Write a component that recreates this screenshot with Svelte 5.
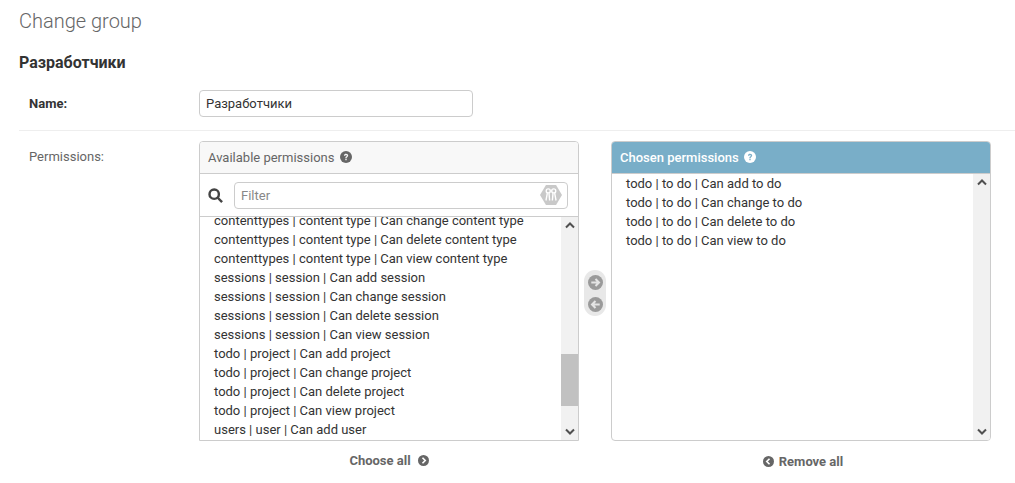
<script lang="ts">
  const available = [
    "contenttypes | content type | Can change content type",
    "contenttypes | content type | Can delete content type",
    "contenttypes | content type | Can view content type",
    "sessions | session | Can add session",
    "sessions | session | Can change session",
    "sessions | session | Can delete session",
    "sessions | session | Can view session",
    "todo | project | Can add project",
    "todo | project | Can change project",
    "todo | project | Can delete project",
    "todo | project | Can view project",
    "users | user | Can add user"
  ];
  const chosen = [
    "todo | to do | Can add to do",
    "todo | to do | Can change to do",
    "todo | to do | Can delete to do",
    "todo | to do | Can view to do"
  ];
</script>

{#snippet help()}
  <svg class="help" viewBox="0 0 16 16" width="12" height="12">
    <circle cx="8" cy="8" r="8" fill="currentColor" />
    <path d="M5.2 6.2C5.4 4.6 6.6 3.7 8.1 3.7c1.6 0 2.8 1 2.8 2.400 0 1.200-.7 1.700-1.400 2.200-.5.4-.7.6-.7 1.200H7.100c0-1.100.3-1.600 1-2.100.6-.4.9-.7.9-1.200 0-.5-.4-.8-.9-.8-.6 0-1 .4-1.100 1z" fill="var(--help-bg)" />
    <rect x="7.100" y="10.400" width="1.800" height="1.900" fill="var(--help-bg)" />
  </svg>
{/snippet}

{#snippet scrollbar(before: number, thumb: number, after: number)}
  <div class="scrollbar">
    <svg class="arrow" viewBox="0 0 10 7" width="10" height="7"><path d="M1 5.5 5 1.5l4 4" /></svg>
    <div class="track">
      <div style="height: {before}px"></div>
      <div class="thumb" style="height: {thumb}px"></div>
      <div style="height: {after}px"></div>
    </div>
    <svg class="arrow" viewBox="0 0 10 7" width="10" height="7"><path d="M1 1.5 5 5.5l4-4" /></svg>
  </div>
{/snippet}

<main>
  <h1>Change group</h1>
  <h2>Разработчики</h2>

  <div class="row name-row">
    <label class="required" for="name">Name:</label>
    <input id="name" class="name-input" value="Разработчики" />
  </div>

  <div class="row perms-row">
    <span class="perm-label">Permissions:</span>
    <div class="selector">
      <div class="column">
        <div class="box">
          <div class="box-title">Available permissions {@render help()}</div>
          <div class="filter">
            <svg class="search" viewBox="0 0 16 16">
              <circle cx="6.600" cy="6.600" r="5" />
              <path d="M10.400 10.400 15 15" />
            </svg>
            <div class="filter-input">
              <span>Filter</span>
              <svg class="keys" viewBox="0 0 24 24" width="22" height="22">
                <path d="M6.500 1h11L24 12l-6.500 11h-11L0 12z" fill="#c9c9c9" />
                <g fill="none" stroke="#fff" stroke-width="1.500">
                  <circle cx="9" cy="7.500" r="2.200" />
                  <circle cx="15" cy="7.500" r="2.200" />
                  <path d="M8 10 6.500 18M9.800 10 10.500 18M14.200 10 13.500 18M16 10 17.500 18" />
                </g>
              </svg>
            </div>
          </div>
          <div class="list-wrap">
            <ul class="list shifted">
              {#each available as item}
                <li>{item}</li>
              {/each}
            </ul>
            {@render scrollbar(120, 52, 20)}
          </div>
        </div>
        <div class="all-link choose">
          Choose all
          <svg viewBox="0 0 16 16" width="11" height="11">
            <circle cx="8" cy="8" r="8" fill="#666" />
            <path d="M6.500 4 10.500 8l-4 4" fill="none" stroke="#fff" stroke-width="2.400" />
          </svg>
        </div>
      </div>

      <div class="mover">
        <div class="mover-pill">
          <svg viewBox="0 0 16 16" width="15" height="15">
            <circle cx="8" cy="8" r="8" fill="#9a9a9a" />
            <path d="M3.500 8h8M8 4.300 11.700 8 8 11.700" fill="none" stroke="#e4e4e4" stroke-width="2.200" />
          </svg>
          <svg viewBox="0 0 16 16" width="15" height="15">
            <circle cx="8" cy="8" r="8" fill="#9a9a9a" />
            <path d="M12.500 8h-8M8 4.300 4.300 8 8 11.700" fill="none" stroke="#e4e4e4" stroke-width="2.200" />
          </svg>
        </div>
      </div>

      <div class="column">
        <div class="box chosen-box">
          <div class="box-title chosen-title">Chosen permissions {@render help()}</div>
          <div class="list-wrap">
            <ul class="list">
              {#each chosen as item}
                <li>{item}</li>
              {/each}
            </ul>
            {@render scrollbar(0, 0, 0)}
          </div>
        </div>
        <div class="all-link remove">
          <svg viewBox="0 0 16 16" width="11" height="11">
            <circle cx="8" cy="8" r="8" fill="#666" />
            <path d="M9.500 4 5.500 8l4 4" fill="none" stroke="#fff" stroke-width="2.400" />
          </svg>
          Remove all
        </div>
      </div>
    </div>
  </div>
</main>

<style>
  :global(body) {
    margin: 0;
    background: #fff;
  }

  main {
    padding: 0 0 0 19px;
    font-family: Roboto, "Liberation Sans", sans-serif;
    font-size: 13px;
    color: #333;
  }

  h1 {
    margin: 0;
    padding-top: 9px;
    font-size: 20px;
    line-height: 24px;
    font-weight: 300;
    color: #666;
  }

  h2 {
    margin: 21px 0 0;
    font-size: 16px;
    line-height: 18px;
    font-weight: 700;
    color: #333;
  }

  .row {
    display: flex;
    padding-left: 10px;
  }

  .name-row {
    padding-top: 18px;
    padding-bottom: 13px;
    border-bottom: 1px solid #eee;
    align-items: center;
  }

  label,
  .perm-label {
    width: 170px;
    flex: none;
    font-size: 13px;
    color: #666;
  }

  .required {
    font-weight: 700;
    color: #333;
  }

  .name-input {
    box-sizing: border-box;
    width: 274px;
    height: 27px;
    padding: 0 6px;
    border: 1px solid #ccc;
    border-radius: 4px;
    font: 13px Roboto, "Liberation Sans", sans-serif;
    color: #333;
    outline: none;
  }

  .perms-row {
    padding-top: 10px;
  }

  .perm-label {
    padding-top: 8px;
    line-height: 15px;
  }

  .selector {
    display: flex;
    width: 792px;
  }

  .column {
    width: 380px;
    flex: none;
  }

  .box {
    box-sizing: border-box;
    height: 300px;
    display: flex;
    flex-direction: column;
    border: 1px solid #ccc;
    border-radius: 4px 4px 0 0;
    overflow: hidden;
  }

  .chosen-box {
    border-radius: 4px;
  }

  .box-title {
    --help-bg: #f8f8f8;
    box-sizing: border-box;
    height: 32px;
    flex: none;
    display: flex;
    align-items: center;
    gap: 6px;
    padding-left: 8px;
    padding-bottom: 1px;
    background: #f8f8f8;
    border-bottom: 1px solid #ccc;
    font-size: 13px;
    color: #666;
  }

  .chosen-title {
    --help-bg: #79aec8;
    background: #79aec8;
    border-bottom-color: #ccc;
    font-weight: 500;
    color: #fff;
    gap: 5px;
    padding-left: 8px;
  }

  .filter {
    box-sizing: border-box;
    height: 43px;
    flex: none;
    display: flex;
    align-items: center;
    padding: 0 10px 0 8px;
    border-bottom: 1px solid #ccc;
  }

  .search {
    width: 15px;
    height: 15px;
    margin-right: 11px;
    fill: none;
    stroke: #444;
    stroke-width: 2.600;
  }

  .filter-input {
    box-sizing: border-box;
    flex: 1;
    height: 27px;
    display: flex;
    align-items: center;
    justify-content: space-between;
    padding: 0 5px 0 6px;
    border: 1px solid #ccc;
    border-radius: 4px;
    color: #888;
  }

  .list-wrap {
    flex: 1;
    min-height: 0;
    display: flex;
  }

  .list {
    flex: 1;
    min-width: 0;
    margin: 0;
    padding: 0 0 0 14px;
    list-style: none;
    overflow: hidden;
    color: #333;
  }

  .shifted li:first-child {
    margin-top: -6px;
  }

  li {
    height: 19px;
    line-height: 19px;
    white-space: nowrap;
  }

  .scrollbar {
    width: 17px;
    flex: none;
    display: flex;
    flex-direction: column;
    background: #f1f1f1;
  }

  .arrow {
    align-self: center;
    flex: none;
    margin: 5px 0;
    fill: none;
    stroke: #505050;
    stroke-width: 2;
  }

  .track {
    flex: 1;
    min-height: 0;
  }

  .thumb {
    background: #c1c1c1;
  }

  .mover {
    width: 32px;
    flex: none;
    display: flex;
    justify-content: center;
    padding-top: 129px;
  }

  .mover-pill {
    width: 22px;
    height: 46px;
    display: flex;
    flex-direction: column;
    align-items: center;
    justify-content: center;
    gap: 7px;
    background: #e8e8e8;
    border-radius: 11px;
  }

  .all-link {
    display: flex;
    align-items: center;
    justify-content: center;
    gap: 6px;
    font-size: 13px;
    font-weight: 700;
    color: #666;
  }

  .choose {
    margin-top: 12px;
    gap: 7px;
  }

  .remove {
    margin-top: 13px;
    padding-left: 4px;
    gap: 5px;
  }
</style>
